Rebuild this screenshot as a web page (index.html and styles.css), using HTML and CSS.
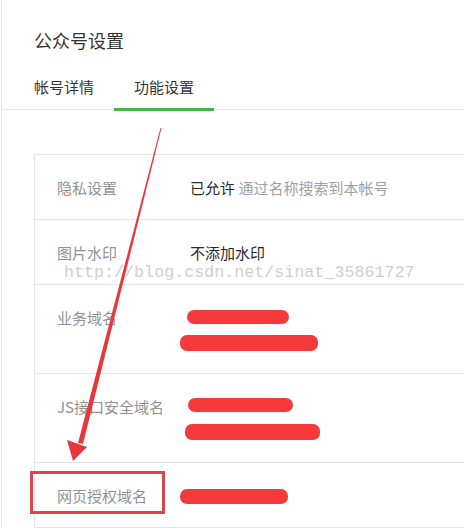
FILE: index.html
```html
<!DOCTYPE html>
<html lang="zh-CN">
<head>
  <meta charset="UTF-8">
  <meta name="viewport" content="width=device-width, initial-scale=1.0">
  <title>公众号设置</title>
  <link rel="stylesheet" href="styles.css">
</head>
<body>

<div class="page">
  <!-- Header with title and tabs -->
  <div class="page-header">
    <h1 class="page-title">公众号设置</h1>
    <div class="tabs">
      <div class="tab">帐号详情</div>
      <div class="tab active">功能设置</div>
    </div>
  </div>

  <!-- Settings table -->
  <div class="settings">
    <div class="row">
      <div class="label">隐私设置</div>
      <div class="value"><span class="strong">已允许</span> 通过名称搜索到本帐号</div>
    </div>
    <div class="row">
      <div class="label">图片水印</div>
      <div class="value"><span class="strong">不添加水印</span></div>
    </div>
    <div class="row">
      <div class="label">业务域名</div>
      <div class="value">
        <div class="line"><span class="scribble s1"></span></div>
        <div class="line"><span class="scribble s2"></span></div>
      </div>
    </div>
    <div class="row">
      <div class="label">JS接口安全域名</div>
      <div class="value">
        <div class="line"><span class="scribble s3"></span></div>
        <div class="line"><span class="scribble s4"></span></div>
      </div>
    </div>
    <div class="row">
      <div class="label">网页授权域名</div>
      <div class="value">
        <div class="line"><span class="scribble s5"></span></div>
      </div>
    </div>
  </div>
</div>

<!-- Blog watermark over the screenshot -->
<div class="watermark">http://blog.csdn.net/sinat_35861727</div>

<!-- Red annotation: arrow and box -->
<svg class="annotation" width="464" height="528" viewBox="0 0 464 528">
  <polygon points="160.5,128 161.5,128 83,444 78,443" fill="#e8373c"/>
  <polygon points="67,440 87,447 73,461" fill="#e8373c"/>
  <rect x="31.5" y="472.5" width="132" height="40" fill="none" stroke="#d4474c" stroke-width="3"/>
</svg>

</body>
</html>
```

FILE: styles.css
```css
body {
  margin: 0;
  padding: 0;
  background-color: #fff;
  font-family: "Noto Sans CJK SC", "Noto Sans", sans-serif;
  color: #333;
  overflow: hidden;
}
.page {
  margin-left: 1px;
  border-left: 1px solid #e6e6e6;
  height: 528px;
}
.page-header {
  padding-top: 28px;
}
.page-title {
  margin: 0 0 23px 32px;
  font-size: 18px;
  font-weight: normal;
  line-height: 24px;
  color: #333;
}
.tabs {
  display: flex;
  padding-left: 12px;
  border-bottom: 1px solid #e4e4e4;
}
.tab {
  padding: 0 20px 9px;
  font-size: 15px;
  line-height: 24px;
  color: #353535;
  border-bottom: 3px solid transparent;
  margin-bottom: -2px;
}
.tab.active {
  border-bottom-color: #44b549;
}
.settings {
  margin: 44px 0 0 32px;
  border-top: 1px solid #e4e4e4;
  border-left: 1px solid #e4e4e4;
}
.row {
  display: flex;
  border-bottom: 1px solid #e4e4e4;
  padding: 21px 0 19px;
  font-size: 15px;
  line-height: 24px;
}
.label {
  width: 133px;
  padding-left: 22px;
  color: #919191;
  flex-shrink: 0;
}
.value {
  color: #a0a0a0;
}
.value .strong {
  color: #2a2a2a;
}
.line {
  height: 24px;
  display: flex;
  align-items: center;
}
.scribble {
  display: inline-block;
  height: 14px;
  border-radius: 7px;
  background-color: #f43a3a;
}
.s1 {
  width: 102px;
  margin-left: -3px;
  margin-top: -2px;
}
.s2 {
  width: 138px;
  height: 16px;
  margin-left: -10px;
  margin-top: 2px;
}
.s3 {
  width: 105px;
  margin-left: -2px;
  margin-top: -4px;
}
.s4 {
  width: 135px;
  height: 16px;
  margin-left: -5px;
  margin-top: 2px;
}
.s5 {
  width: 108px;
  height: 15px;
  margin-left: -10px;
}
.watermark {
  position: absolute;
  left: 64px;
  top: 262px;
  font-family: "Liberation Mono", monospace;
  font-size: 16.7px;
  line-height: 22px;
  color: #cfcfcf;
  white-space: nowrap;
  pointer-events: none;
}
.annotation {
  position: absolute;
  left: 0;
  top: 0;
  pointer-events: none;
}
```
